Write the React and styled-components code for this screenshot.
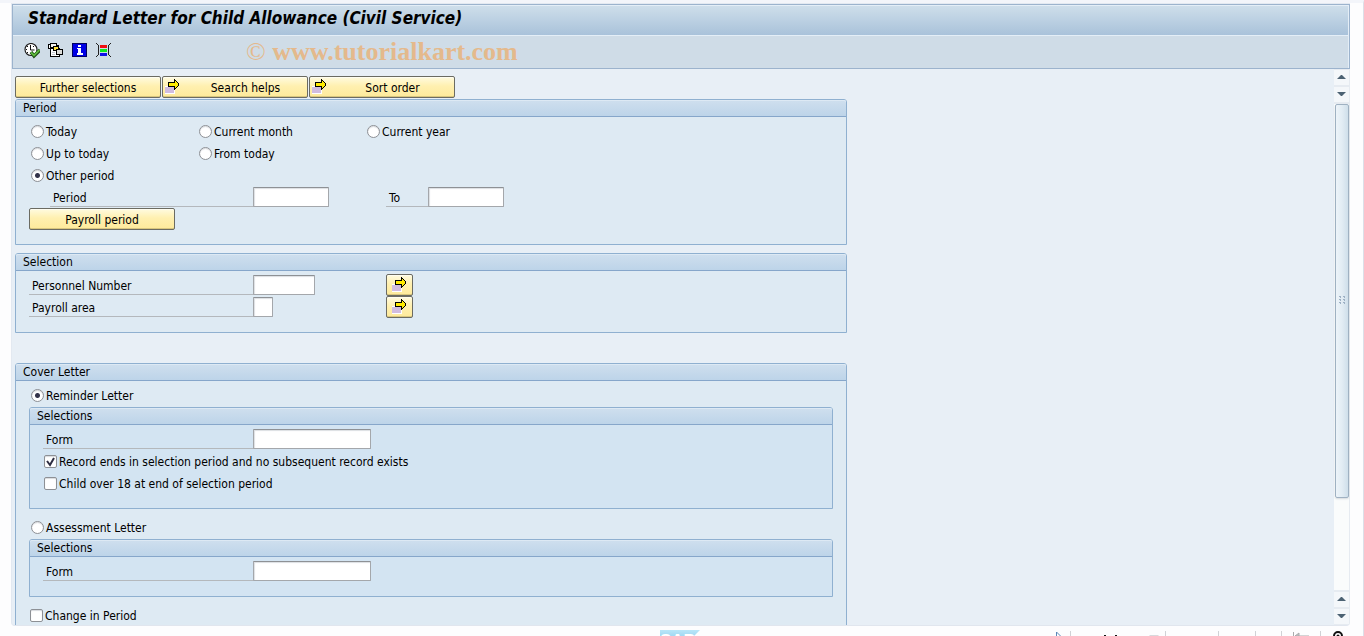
import React from "react";
import styled, { createGlobalStyle, css } from "styled-components";

const Global = createGlobalStyle`
  *, *::before, *::after { box-sizing: border-box; }
  body {
    margin: 0;
    background: #fdfdfe;
    color: #000;
    font-family: Tahoma, "DejaVu Sans Condensed", "DejaVu Sans", sans-serif;
    font-size: 12px;
    line-height: 16px;
  }
  button, input { font: inherit; color: inherit; }
`;

const Page = styled.div`
  display: flex;
  flex-direction: column;
  height: 100vh;
  overflow: hidden;
  padding: 0 13px 0 11px;
  border-top: 3px solid #f3f5fa;
  border-right: 1px solid #dcdfe8;
`;

const Screen = styled.div`
  flex: 1;
  min-height: 0;
  display: flex;
  flex-direction: column;
  background: #e8eff6;
  border-left: 1px solid #e3e9f1;
  border-top: 1px solid #e3e9f1;
  border-bottom: 1px solid #e1e6ee;
  border-radius: 0 0 4px 4px;
  overflow: hidden;
`;

const Header = styled.header`
  border: 1px solid #9cb3cd;
`;

const Title = styled.h1`
  margin: 0;
  height: 31px;
  padding: 1px 15px 0;
  background: linear-gradient(#cfdfeb, #a9c2da);
  border-bottom: 1px solid #e4eef7;
  box-shadow: inset -1px 1px 0 #e4eef7;
  font-size: 17px;
  line-height: 24px;
  font-weight: bold;
  font-style: italic;
`;

const Toolbar = styled.div`
  display: flex;
  align-items: center;
  height: 32px;
  padding: 0 10px 2px;
  gap: 6px;
  background: #cfdce7;
  box-shadow: inset -1px 0 0 #e4eef7;
`;

const ToolButton = styled.button`
  width: 18px;
  height: 18px;
  padding: 1px;
  border: 0;
  background: none;
  svg { display: block; }
`;

const Watermark = styled.span`
  margin: 2px 0 0 127px;
  color: #e4b98c;
  font: bold 26px/28px "Liberation Serif", serif;
`;

const Thin = styled.span`
  font-weight: normal;
`;

const Body = styled.div`
  flex: 1;
  min-height: 0;
  display: flex;
`;

const Content = styled.main`
  flex: 1;
  min-width: 0;
  overflow: hidden;
  padding: 7px 3px 0;
`;

const Form = styled.form`
  width: 100%;
  max-width: 832px;
`;

const Actions = styled.div`
  display: flex;
  gap: 1px;
  margin-bottom: 1px;
`;

const PushButton = styled.button`
  display: flex;
  align-items: center;
  width: ${(p) => (p.$compact ? "27px" : "146px")};
  height: 22px;
  padding: 0 2px;
  border: 1px solid #6b6b62;
  border-radius: 2px;
  background: linear-gradient(#fffbe0, #fff0b0 45%, #feea9b);
  box-shadow: inset 0 1px 0 #fffdf0, inset 0 -1px 0 #d8c67e;
  justify-content: center;
  svg { flex: none; margin-top: -3px; }
  span { flex: 1; padding-top: 2px; text-align: center; }
  svg + span { margin-left: 5px; }
`;

const panelBase = css`
  margin: 0;
  border: 1px solid #8fb0d0;
  border-radius: 3px 3px 0 0;
`;

const Panel = styled.section`
  ${panelBase}
  background: ${(p) => (p.$nested ? "#d3e4f2" : "#deeaf3")};
  margin-top: ${(p) => p.$gap || 0}px;
`;

const PanelTitle = styled.h2`
  margin: 0;
  height: 17px;
  padding: 0 7px;
  border-bottom: 1px solid #86a6ca;
  border-radius: 2px 2px 0 0;
  background: linear-gradient(#cfdfee, #bdd4e9);
  box-shadow: inset 0 1px 0 #dde9f4;
  font-size: 12px;
  line-height: 16px;
  font-weight: normal;
`;

const PanelBody = styled.div`
  padding: 3px 13px 14px;
`;

const Row = styled.div`
  display: flex;
  align-items: center;
  height: 22px;
  padding-left: ${(p) => p.$indent || 0}px;
`;

const Label = styled.label`
  flex: none;
  width: ${(p) => p.$w}px;
  height: 20px;
  padding: 3px 3px 0;
  border-bottom: 1px solid #b4b8bc;
`;

const Field = styled.span`
  flex: none;
  display: flex;
  width: ${(p) => p.$w}px;
`;

const Input = styled.input`
  width: ${(p) => p.$w}px;
  height: 20px;
  padding: 0 3px;
  border: 1px solid #a4a7ab;
  border-top-color: #8e9195;
  border-radius: 1px;
  background: #fff;
  box-shadow: inset 1px 1px 1px #dcdfe3;
  outline: 0;
`;

const Choice = styled.label`
  display: flex;
  align-items: center;
  gap: 2px;
  min-width: 168px;
  padding-left: ${(p) => (p.$box ? 1 : 2)}px;
  white-space: nowrap;
`;

const ChoiceText = styled.span`
  padding-top: 2px;
`;

const Radio = styled.input.attrs({ type: "radio" })`
  appearance: none;
  width: 13px;
  height: 13px;
  margin: 0;
  border: 1px solid #8d9095;
  border-radius: 50%;
  background: #fff;
  box-shadow: inset 0 1px 1px #d8dade;
  &:checked {
    background: radial-gradient(circle, #33334a 0 2px, #fff 3px);
  }
`;

const Tick = styled.span`
  display: grid;
  width: 13px;
  height: 13px;
  input, svg { grid-area: 1 / 1; }
  svg { display: none; pointer-events: none; }
  input:checked + svg { display: block; }
`;

const Box = styled.input.attrs({ type: "checkbox" })`
  appearance: none;
  width: 13px;
  height: 13px;
  margin: 0;
  border: 1px solid #8d9095;
  border-radius: 2px;
  background: #fff;
  box-shadow: inset 0 1px 1px #d8dade;
`;

const Spacer = styled.div`
  height: ${(p) => p.$h}px;
`;

const Scrollbar = styled.div`
  flex: none;
  display: flex;
  flex-direction: column;
  gap: 2px;
  width: 16px;
  padding: 1px 1px 1px 0;
  background: #e6ebf1;
`;

const ScrollButton = styled.button`
  display: grid;
  place-items: center;
  flex: none;
  width: 15px;
  height: 15px;
  padding: 0;
  border: 0;
  background: #f4f7fa;
`;

const Track = styled.div`
  flex: 1;
  padding: 0 0 0 1px;
  background: #fafcfc;
`;

const Thumb = styled.div`
  display: grid;
  place-items: center;
  height: 81%;
  border: 1px solid #9fb1c2;
  border-radius: 2px;
  background: linear-gradient(90deg, #edf4f9, #e2ecf4 50%, #cfdfea);
  box-shadow: 0 1px 2px #d5dade;
`;

const Status = styled.footer`
  flex: none;
  display: flex;
  justify-content: space-between;
  height: 10px;
  padding: 4px 1px 0 649px;
  overflow: hidden;
`;

const ArrowIcon = () => (
  <svg width="16" height="16" viewBox="0 0 16 16" aria-hidden="true" shapeRendering="crispEdges">
    <path d="M0 8h10v8H0z" fill="#fff" />
    <path d="M0 9h9v6H0z" fill="#d1bcdf" />
    <path d="M3 4h6V1h1l4 5v1l-4 5H9V9H3z" fill="#000" />
    <path d="M4 5h6V3l3 3v1l-3 3V8H4z" fill="#ffea00" />
  </svg>
);

const ExecuteIcon = () => (
  <svg width="16" height="16" viewBox="0 0 16 16" aria-hidden="true">
    <circle cx="7" cy="6.500" r="6" fill="#fff" stroke="#222" strokeWidth="1.200" />
    <path d="M6.500 2v5h4M6.500 10v1M2 6.500h1M10 3l-1 1M3 3l1 1M3 10l1-1" stroke="#111" fill="none" />
    <path d="M7 9l3 4 6-6" stroke="#1c4a14" strokeWidth="3.400" fill="none" />
    <path d="M7 9.500l3 3 5.500-5.500" stroke="#5cb83c" strokeWidth="1.800" fill="none" />
  </svg>
);

const VariantIcon = () => (
  <svg width="16" height="16" viewBox="0 0 16 16" aria-hidden="true" shapeRendering="crispEdges">
    <path d="M0 1h2V0h7v2h2v3h1v9H2V6H0z" fill="#000" />
    <path d="M1 2h1v3H1zM3 6h3v2h3v5h2v0H3z" fill="#fff" />
    <path d="M3 7h8v6H3z" fill="#fff" />
    <path d="M3 1h5v3H3z" fill="#f4f4f0" />
    <path d="M5 3h6v5H5z" fill="#000" />
    <path d="M6 4h4v3H6z" fill="#ffe23c" />
    <path d="M8 6h7v6H8z" fill="#000" />
    <path d="M9 7h5v4H9z" fill="#dcdcd8" />
    <path d="M4 9h3v1H4zM4 11h3v1H4z" fill="#c6cbd1" />
  </svg>
);

const InfoIcon = () => (
  <svg width="16" height="16" viewBox="0 0 16 16" aria-hidden="true" shapeRendering="crispEdges">
    <path d="M0 0h15v14H0z" fill="#000060" />
    <path d="M1 1h13v12H1z" fill="#0000e6" />
    <path d="M6 2h3v2H6zM5 5h4v5h2v2H5v-2h1V6H5z" fill="#fff" />
  </svg>
);

const ColorIcon = () => (
  <svg width="16" height="16" viewBox="0 0 16 16" aria-hidden="true" shapeRendering="crispEdges">
    <path d="M0 0h1v1H0zM1 1h1v1H1zM2 2h1v10H2zM1 12h1v1H1zM0 13h1v1H0zM14 0h1v1h-1zM13 1h1v1h-1zM12 2h1v10h-1zM13 12h1v1h-1zM14 13h1v1h-1z" fill="#222" />
    <path d="M4 2h7v3H4z" fill="#f01010" />
    <path d="M4 6h7v3H4z" fill="#10e820" />
    <path d="M4 10h7v3H4z" fill="#1010e8" />
  </svg>
);

const Triangle = ({ down }) => (
  <svg width="9" height="5" viewBox="0 0 9 5" aria-hidden="true">
    <path d={down ? "M0 0h9L5 4H4z" : "M0 4h9L5 0H4z"} fill="#4c6273" />
  </svg>
);

const GripIcon = () => (
  <svg width="7" height="9" viewBox="0 0 7 9" aria-hidden="true" shapeRendering="crispEdges">
    {[0, 3, 6].map((y) => (
      <path key={y} d={`M0 ${y}h2v2H1v-1H0zM4 ${y}h2v2H5v-1H4z`} fill="#9db0c4" />
    ))}
  </svg>
);

const SapLogo = () => (
  <svg width="40" height="20" viewBox="0 0 40 20" role="img" aria-label="SAP">
    <defs>
      <linearGradient id="sap" x1="0" y1="0" x2="0" y2="1">
        <stop offset="0" stopColor="#b9e6f8" />
        <stop offset="1" stopColor="#6cbbe8" />
      </linearGradient>
    </defs>
    <path d="M0 0h40L20 20H0z" fill="url(#sap)" />
    <text x="0" y="16" fontFamily="Liberation Sans, sans-serif" fontWeight="bold" fontSize="17" fill="#fff">SAP</text>
  </svg>
);

const StatusIcons = () => (
  <svg width="294" height="20" viewBox="0 0 294 20" aria-hidden="true">
    <path d="M1.500 2v12l6-6z" fill="#fff" stroke="#5b87b8" />
    <path d="M15.500 1v18M110.500 1v18M163.500 1v18M200.500 1v18M226.500 1v18M265.500 1v18" stroke="#d0d2d6" />
    <path d="M49 5h2v8h-2zM60 5h2v8h-2z" fill="#111" />
    <path d="M94 5h10l-5 5z" fill="#d8d9dc" />
    <path d="M238.500 2v14M240 6h14M240 6l4-3v6z" stroke="#a9abad" fill="#c4c5c7" />
    <path d="M279 10V6a4 4 0 0 1 8 0v4" stroke="#111" strokeWidth="2" fill="none" />
    <circle cx="283" cy="6" r="1.500" fill="#111" />
  </svg>
);

const RadioChoice = ({ children, ...rest }) => (
  <Choice>
    <Radio {...rest} />
    <ChoiceText>{children}</ChoiceText>
  </Choice>
);

const CheckChoice = ({ children, ...rest }) => (
  <Choice $box>
    <Tick>
      <Box {...rest} />
      <svg width="13" height="13" viewBox="0 0 13 13" aria-hidden="true">
        <path d="M3 6l3 4 4-7" stroke="#2d2d42" strokeWidth="2" fill="none" />
      </svg>
    </Tick>
    <ChoiceText>{children}</ChoiceText>
  </Choice>
);

const Group = ({ title, children, ...rest }) => (
  <Panel {...rest}>
    <PanelTitle>{title}</PanelTitle>
    <PanelBody>{children}</PanelBody>
  </Panel>
);

const tools = [
  ["Execute", ExecuteIcon],
  ["Get variant", VariantIcon],
  ["Information", InfoIcon],
  ["Color legend", ColorIcon],
];

export default function App() {
  return (
    <Page>
      <Global />
      <Screen>
        <Header>
          <Title>Standard Letter for Child Allowance (Civil Service)</Title>
          <Toolbar>
            {tools.map(([name, Icon]) => (
              <ToolButton key={name} type="button" aria-label={name}>
                <Icon />
              </ToolButton>
            ))}
            <Watermark><Thin>©</Thin> www.tutorialkart.com</Watermark>
          </Toolbar>
        </Header>
        <Body>
          <Content>
            <Form>
              <Actions>
                <PushButton type="button"><span>Further selections</span></PushButton>
                <PushButton type="button"><ArrowIcon /><span>Search helps</span></PushButton>
                <PushButton type="button"><ArrowIcon /><span>Sort order</span></PushButton>
              </Actions>

              <Group title="Period">
                <Row>
                  <RadioChoice name="period">Today</RadioChoice>
                  <RadioChoice name="period">Current month</RadioChoice>
                  <RadioChoice name="period">Current year</RadioChoice>
                </Row>
                <Row>
                  <RadioChoice name="period">Up to today</RadioChoice>
                  <RadioChoice name="period">From today</RadioChoice>
                </Row>
                <Row>
                  <RadioChoice name="period" defaultChecked>Other period</RadioChoice>
                </Row>
                <Row $indent={21}>
                  <Label $w={203} htmlFor="from">Period</Label>
                  <Field $w={133}><Input $w={76} id="from" /></Field>
                  <Label $w={42} htmlFor="to">To</Label>
                  <Input $w={76} id="to" />
                </Row>
                <Row>
                  <PushButton type="button"><span>Payroll period</span></PushButton>
                </Row>
              </Group>

              <Group title="Selection" $gap={8}>
                <Row>
                  <Label $w={224} htmlFor="pernr">Personnel Number</Label>
                  <Field $w={133}><Input $w={62} id="pernr" /></Field>
                  <PushButton $compact type="button" aria-label="Multiple selection for personnel number"><ArrowIcon /></PushButton>
                </Row>
                <Row>
                  <Label $w={224} htmlFor="area">Payroll area</Label>
                  <Field $w={133}><Input $w={20} id="area" /></Field>
                  <PushButton $compact type="button" aria-label="Multiple selection for payroll area"><ArrowIcon /></PushButton>
                </Row>
              </Group>

              <Group title="Cover Letter" $gap={30}>
                <Row>
                  <RadioChoice name="letter" defaultChecked>Reminder Letter</RadioChoice>
                </Row>
                <Group title="Selections" $nested $gap={1}>
                  <Row>
                    <Label $w={210} htmlFor="form1">Form</Label>
                    <Input $w={118} id="form1" />
                  </Row>
                  <Row>
                    <CheckChoice defaultChecked>Record ends in selection period and no subsequent record exists</CheckChoice>
                  </Row>
                  <Row>
                    <CheckChoice>Child over 18 at end of selection period</CheckChoice>
                  </Row>
                </Group>
                <Spacer $h={7} />
                <Row>
                  <RadioChoice name="letter">Assessment Letter</RadioChoice>
                </Row>
                <Group title="Selections" $nested $gap={1}>
                  <Row>
                    <Label $w={210} htmlFor="form2">Form</Label>
                    <Input $w={118} id="form2" />
                  </Row>
                </Group>
                <Spacer $h={7} />
                <Row>
                  <CheckChoice>Change in Period</CheckChoice>
                </Row>
              </Group>
            </Form>
          </Content>
          <Scrollbar>
            <ScrollButton type="button" aria-label="Scroll up"><Triangle /></ScrollButton>
            <ScrollButton type="button" aria-label="Line down"><Triangle down /></ScrollButton>
            <Track>
              <Thumb><GripIcon /></Thumb>
            </Track>
            <ScrollButton type="button" aria-label="Line up"><Triangle /></ScrollButton>
            <ScrollButton type="button" aria-label="Scroll down"><Triangle down /></ScrollButton>
          </Scrollbar>
        </Body>
      </Screen>
      <Status>
        <SapLogo />
        <StatusIcons />
      </Status>
    </Page>
  );
}
